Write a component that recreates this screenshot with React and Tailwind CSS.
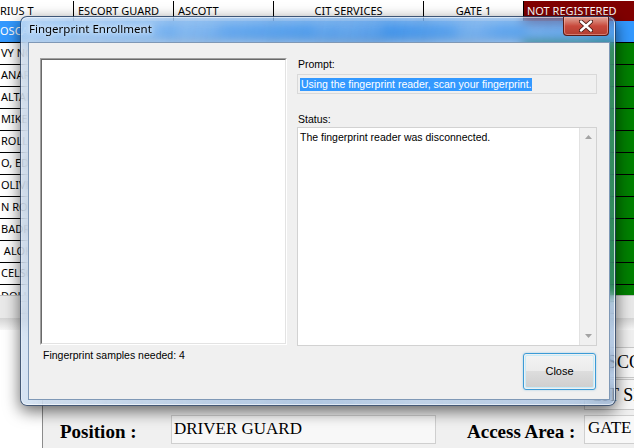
import React from "react";

const GRID = "grid grid-cols-[74px_100px_100px_150px_100px_110px]";

const names = [
  "VY NGUYEN",
  "ANAR SINGH",
  "ALTAF",
  "MIKE JONES",
  "ROLLY",
  "O, EDWIN",
  "OLIVER",
  "N ROBERT",
  "BADRUL",
  " ALOK",
  "CELSO",
  "DOLLY",
];

function DataRow({ name, last }) {
  return (
    <div className={`${GRID} h-[22px] shrink-0 ${last ? "" : "border-b border-black"}`}>
      <div className="border-r border-black bg-white flex items-center overflow-hidden whitespace-pre text-[11px] text-black pl-[1px]">{name}</div>
      <div className="border-r border-black bg-white flex items-center pl-[4px] text-[11px] text-black">DRIVER GUARD</div>
      <div className="border-r border-black bg-white flex items-center pl-[4px] text-[11px] text-black">ASCOTT</div>
      <div className="border-r border-black bg-white flex items-center justify-center text-[11px] text-black">CIT SERVICES</div>
      <div className="border-r border-black bg-white flex items-center justify-center text-[11px] text-black">GATE 1</div>
      <div className="bg-[#008000] flex items-center pl-[3px] text-[11px] text-white">REGISTERED</div>
    </div>
  );
}

function Background() {
  return (
    <div className="flex flex-col w-[634px] h-[448px]">
      <div className="flex flex-col h-[295px] shrink-0 overflow-hidden bg-white font-['Noto_Sans',sans-serif]">
        <div className={`${GRID} h-[21px] shrink-0 pt-[1px]`}>
          <div className="border-r border-black flex items-center text-[11px] text-black">RIUS T</div>
          <div className="border-r border-black flex items-center pl-[4px] text-[11px] text-black">ESCORT GUARD</div>
          <div className="border-r border-black flex items-center pl-[4px] text-[11px] text-black">ASCOTT</div>
          <div className="border-r border-black flex items-center justify-center text-[11px] text-black">CIT SERVICES</div>
          <div className="border-r border-black flex items-center justify-center text-[11px] text-black">GATE 1</div>
          <div className="bg-[#800000] flex items-center pl-[3px] text-[11px] text-white">NOT REGISTERED</div>
        </div>
        <div className={`${GRID} h-[22px] shrink-0 bg-[#3399ff] border-b border-black text-white text-[11px]`}>
          <div className="flex items-center">OSCAR</div>
          <div className="flex items-center pl-[4px]">DRIVER GUARD</div>
          <div className="flex items-center pl-[4px]">ASCOTT</div>
          <div className="flex items-center justify-center">CIT SERVICES</div>
          <div className="flex items-center justify-center">GATE 1</div>
          <div className="flex items-center pl-[3px]">REGISTERED</div>
        </div>
        {names.map((n, i) => (
          <DataRow key={i} name={n} last={i === names.length - 1} />
        ))}
      </div>
      {/* horizontal scrollbar */}
      <div className="h-[23px] shrink-0 bg-[#e9e9e9] border-t border-[#bdbdbd] flex flex-col justify-center">
        <div className="h-[13px] mx-[20px] border-y border-[#a9a9a9] bg-gradient-to-b from-[#f4f4f4] to-[#d6d6d6]" />
      </div>
      <div className="h-[12px] shrink-0 bg-gradient-to-b from-[#d4d4d4] to-[#f7f7f7]" />
      {/* bottom form panel */}
      <div className="flex flex-1 font-['Liberation_Serif',serif]">
        <div className="w-[43px] shrink-0 bg-white border-r border-[#8c8c8c]" />
        <div className="flex-1 bg-[#f0f0f0] flex flex-col pt-[17px]">
          <div className="ml-[541px] h-[31px] w-[60px] shrink-0 border border-[#c8c8c8] bg-[#f7f7f7] pl-[9px] text-[18px] leading-[28px] text-black whitespace-nowrap overflow-hidden">ASCOTT</div>
          <div className="ml-[541px] mt-[1px] h-[31px] w-[60px] shrink-0 border border-[#c8c8c8] bg-[#f7f7f7] pl-[5px] text-[18px] leading-[30px] text-black whitespace-nowrap overflow-hidden">CIT SERVICES</div>
          <div className="flex items-start mt-[5px] pl-[17px]">
            <div className="w-[111px] shrink-0 mt-[6px] text-[19px] leading-[22px] font-bold text-black whitespace-nowrap">Position :</div>
            <div className="w-[265px] shrink-0 h-[29px] border border-[#cfcfcf] bg-[#f8f8f8] pl-[2px] pt-[2px] text-[17px] leading-[22px] text-black">DRIVER GUARD</div>
            <div className="w-[117px] shrink-0 ml-[31px] mt-[6px] text-[19px] leading-[22px] font-bold text-black whitespace-nowrap">Access Area :</div>
            <div className="w-[60px] shrink-0 h-[29px] border border-[#cfcfcf] bg-[#f8f8f8] pl-[3px] pt-[1px] text-[17px] leading-[22px] text-black whitespace-nowrap overflow-hidden">GATE 1</div>
          </div>
        </div>
      </div>
    </div>
  );
}

function ArrowUp() {
  return (
    <svg width="7" height="4" viewBox="0 0 7 4">
      <path d="M0 4 L3.5 0 L7 4 Z" fill="#a3a3a3" />
    </svg>
  );
}
function ArrowDown() {
  return (
    <svg width="7" height="4" viewBox="0 0 7 4">
      <path d="M0 0 L3.5 4 L7 0 Z" fill="#a3a3a3" />
    </svg>
  );
}

function Dialog() {
  return (
    <div className="absolute left-[20px] top-[16px] w-[596px] h-[390px] rounded-[7px] border border-[rgba(20,40,70,0.7)] shadow-[0_5px_16px_rgba(0,0,0,0.6)] bg-[rgba(85,140,205,0.4)] backdrop-blur-[6px] flex flex-col overflow-hidden">
      <div className="absolute inset-0 rounded-[6px] border border-[rgba(255,255,255,0.55)] bg-[linear-gradient(100deg,rgba(255,255,255,0.5)_0%,rgba(255,255,255,0.2)_30%,rgba(255,255,255,0)_55%,rgba(255,255,255,0.18)_70%,rgba(255,255,255,0.05)_100%)] pointer-events-none" />
      {/* title bar */}
      <div className="relative h-[25px] shrink-0 flex items-start justify-between">
        <div className="pl-[8px] pt-[5px] font-['Noto_Sans',sans-serif] text-[11.5px] leading-[14px] text-black [text-shadow:0_0_8px_rgba(255,255,255,1),0_0_4px_rgba(255,255,255,0.9)]">
          Fingerprint Enrollment
        </div>
        <div className="mr-[6px] w-[46px] h-[19px] rounded-b-[4px] border border-t-0 border-[#5a1a14] bg-gradient-to-b from-[#dea59a] via-[#c8493c] to-[#b13d30] shadow-[inset_0_0_0_1px_rgba(255,200,190,0.45)] flex items-center justify-center">
          <svg width="14" height="12" viewBox="0 0 14 12">
            <path d="M2 1.5 L12 10.5 M12 1.5 L2 10.5" stroke="#4a1a14" strokeWidth="4.2" strokeLinecap="round" />
            <path d="M2 1.5 L12 10.5 M12 1.5 L2 10.5" stroke="#ffffff" strokeWidth="2.4" strokeLinecap="round" />
          </svg>
        </div>
      </div>
      {/* client area */}
      <div className="relative flex-1 ml-[7px] mr-[5px] mb-[5px] bg-[#f0f0f0] border border-[#7f98b6] flex pl-[11px] pt-[15px] font-['Liberation_Sans',sans-serif] text-black">
        <div className="w-[247px] flex flex-col">
          <div className="h-[287px] border border-t-[#a0a0a0] border-l-[#a0a0a0] border-b-white border-r-white">
            <div className="w-full h-full border border-t-[#696969] border-l-[#696969] border-b-[#e3e3e3] border-r-[#e3e3e3] bg-white" />
          </div>
          <div className="mt-[4px] pl-[3px] text-[10.5px] leading-[12px] whitespace-nowrap">Fingerprint samples needed: 4</div>
        </div>
        <div className="ml-[10px] w-[300px] flex flex-col">
          <div className="text-[10.5px] leading-[13px] pl-[1px]">Prompt:</div>
          <div className="mt-[3px] h-[20px] border border-[#d9d9d9] bg-[#f0f0f0] flex items-center pl-[2px]">
            <span className="bg-[#3399ff] text-white text-[10.5px] leading-[13px] whitespace-nowrap pl-[1px]">Using the fingerprint reader, scan your fingerprint.</span>
          </div>
          <div className="mt-[19px] text-[10.5px] leading-[13px] pl-[1px]">Status:</div>
          <div className="mt-[1px] h-[219px] border border-[#d2d2d2] bg-white flex">
            <div className="flex-1 pl-[2px] pt-[3px] text-[10.5px] leading-[13px]">The fingerprint reader was disconnected.</div>
            <div className="w-[17px] bg-[#f0f0f0] border-l border-[#e2e2e2] flex flex-col items-center justify-between pt-[7px] pb-[7px]">
              <ArrowUp />
              <ArrowDown />
            </div>
          </div>
          <div className="mt-[7px] self-end mr-[1px] w-[73px] h-[37px] rounded-[3px] border border-[#3c9bd6] p-[1px] shadow-[0_0_2px_rgba(60,160,220,0.5)]">
            <div className="w-full h-full rounded-[2px] border border-[#c6ecfa] flex items-center justify-center text-[11px] bg-[linear-gradient(to_bottom,#f3f3f3_0%,#ebebeb_50%,#dddddd_50%,#cfcfcf_100%)]">
              Close
            </div>
          </div>
        </div>
      </div>
    </div>
  );
}

export default function App() {
  return (
    <div className="relative w-[634px] h-[448px] overflow-hidden bg-white">
      <Background />
      <Dialog />
    </div>
  );
}
